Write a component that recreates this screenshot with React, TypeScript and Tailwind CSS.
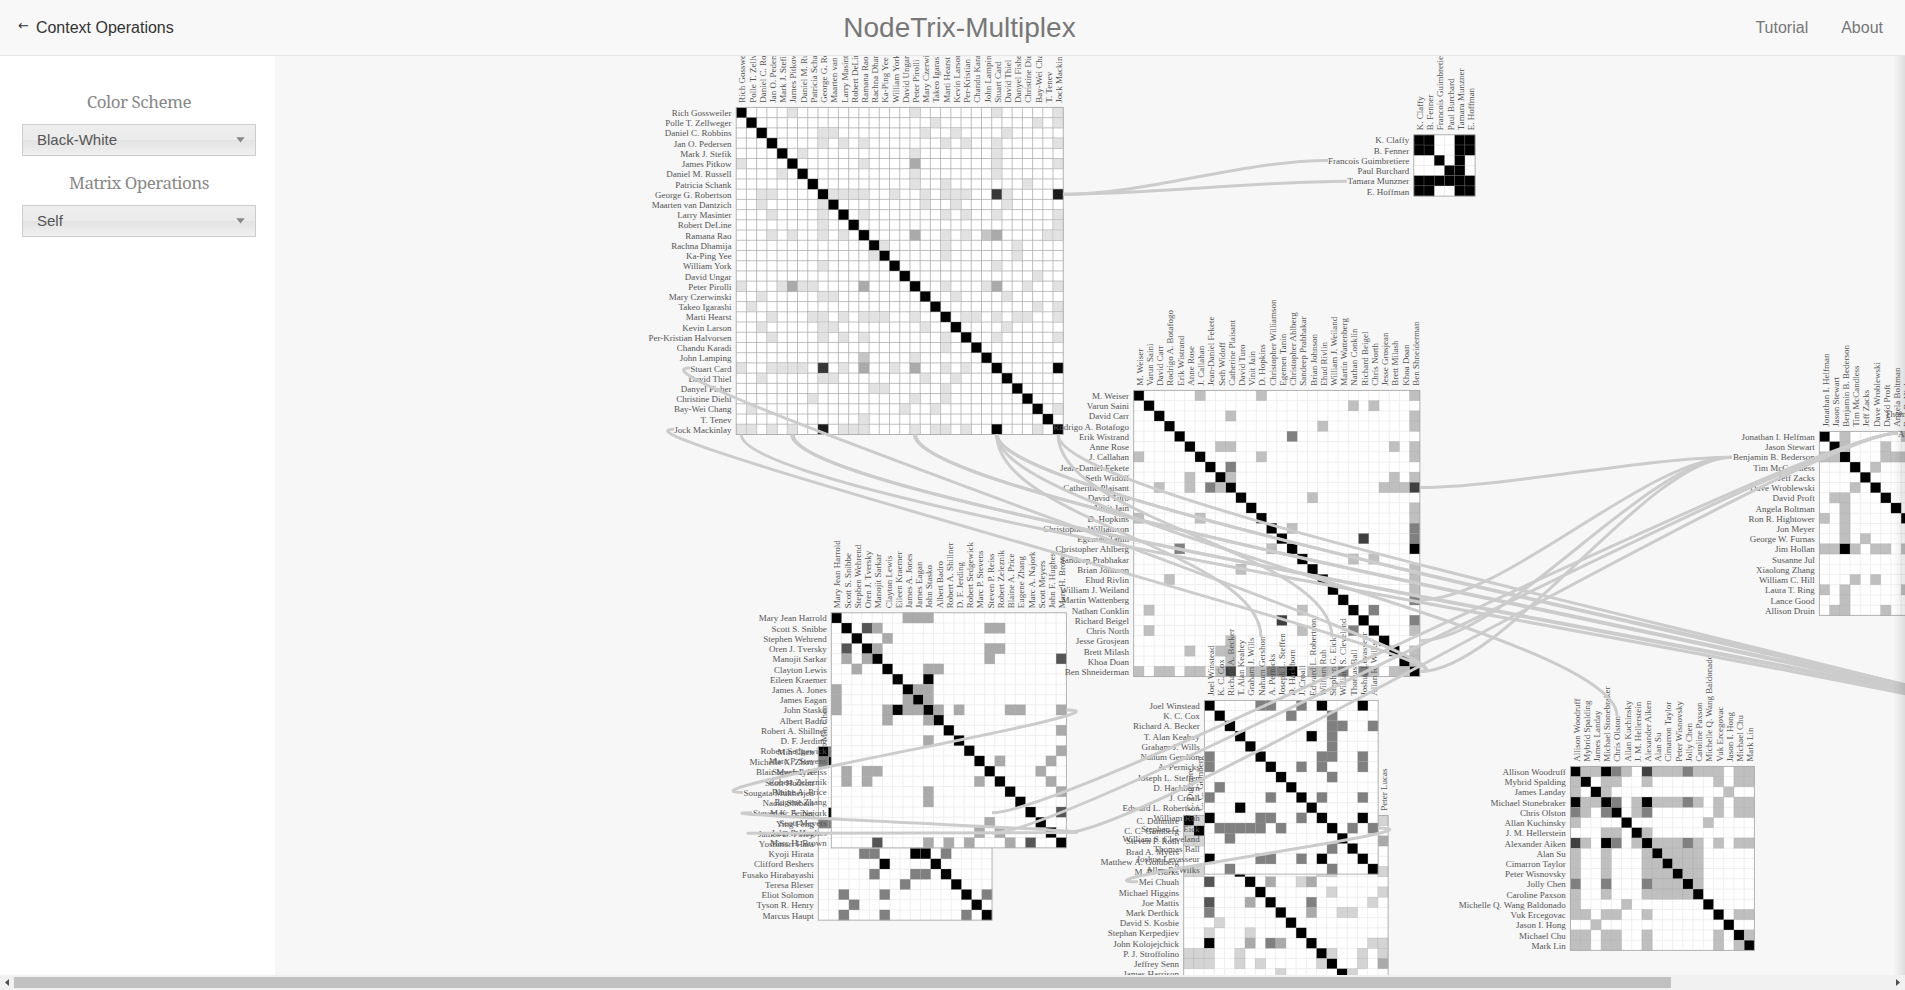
import React from "react";

const PITCH = 10.22;
const SHADES: Record<string, string> = {
  k: "#000000", r: "#1c1c1c", q: "#383838", t: "#404040", d: "#555555",
  m: "#808080", a: "#aaaaaa", g: "#c5c5c5", b: "#bfbfbf", l: "#d4d4d4", e: "#e2e2e2",
};

type Matrix = {
  x: number;
  y: number;
  names: string[];
  // "row:col col=shade ..." for the upper triangle; mirrored when drawn
  cells: string[];
  base: string;
  strong?: boolean;
};

const split = (s: string) => s.split(",").map((v) => v.trim());

const parc: Matrix = {
  x: 736.2, y: 107.4, base: "e", strong: true,
  names: split("Rich Gossweiler,Polle T. Zellweger,Daniel C. Robbins,Jan O. Pedersen,Mark J. Stefik,James Pitkow,Daniel M. Russell,Patricia Schank,George G. Robertson,Maarten van Dantzich,Larry Masinter,Robert DeLine,Ramana Rao,Rachna Dhamija,Ka-Ping Yee,William York,David Ungar,Peter Pirolli,Mary Czerwinski,Takeo Igarashi,Marti Hearst,Kevin Larson,Per-Kristian Halvorsen,Chandu Karadi,John Lamping,Stuart Card,David Thiel,Danyel Fisher,Christine Diehl,Bay-Wei Chang,T. Tenev,Jock Mackinlay"),
  cells: ["0:5 17 25 31", "1:19 29 31", "2:8 9 18 21 26", "3:8 10 12 20 22 25 31", "4:6 17 25", "5:12 17=a 25 31", "6:17 25", "7:17 20 28",
    "8:9 10 11 12 15 18 20 21 22 25=q 26 31=r", "9:18 21 26", "10:12 20 22 25 31", "11:31", "12:17=a 20 22 24=g 25=a 30 31", "13:14 20 27", "14:20 27",
    "15:25", "16:29", "17:20 24 25=a 28 31", "18:21 26", "19:29 31", "20:22 23 25 27 28 31", "21:26", "22:25 31", "25:31=k", "29:31"],
};

const claffy: Matrix = {
  x: 1413.8, y: 134.8, base: "k",
  names: split("K. Claffy,B. Fenner,Francois Guimbretiere,Paul Burchard,Tamara Munzner,E. Hoffman"),
  cells: ["0:1 4 5", "1:4 5", "2:4", "3:4", "4:5"],
};

const maryland: Matrix = {
  x: 1133.7, y: 390.4, base: "b",
  names: split("M. Weiser,Varun Saini,David Carr,Rodrigo A. Botafogo,Erik Wistrand,Anne Rose,J. Callahan,Jean-Daniel Fekete,Seth Widoff,Catherine Plaisant,David Turo,Vinit Jain,D. Hopkins,Christopher Williamson,Egemen Tanin,Christopher Ahlberg,Sandeep Prabhakar,Brian Johnson,Ehud Rivlin,William J. Weiland,Martin Wattenberg,Nathan Conklin,Richard Beigel,Chris North,Jesse Grosjean,Brett Milash,Khoa Doan,Ben Shneiderman"),
  cells: ["0:6 12 27", "1:21 23", "2:9 27", "3:18 27", "4:15=m", "5:8 9 25 27", "6:12 27", "7:9=m", "8:9 25 27", "9:24 25 26 27=t", "10:17", "11:27", "12:27",
    "13:15 27=m", "14:22=t 27=m", "15:27=k", "16:21 23", "17:27", "18:27", "19:27", "20:27=m", "21:23=m", "22:27=m", "23:27", "25:27", "26:27"],
};

const brown: Matrix = {
  x: 831.3, y: 612.8, base: "a",
  names: split("Mary Jean Harrold,Scott S. Snibbe,Stephen Wehrend,Oren J. Tversky,Manojit Sarkar,Clayton Lewis,Eileen Kraemer,James A. Jones,James Eagan,John Stasko,Albert Badro,Robert A. Shillner,D. F. Jerding,Robert Sedgewick,Marc P. Stevens,Steven P. Reiss,Robert Zeleznik,Blaine A. Price,Eugene Zhang,Marc A. Najork,Scott Meyers,John F. Hughes,Marc H. Brown"),
  cells: ["0:7 8 9", "1:3=d 4 15 16", "2:5", "3:4 15 16", "4:15 22=d", "5:9 10", "6:9=k", "7:8 9", "8:9", "9:10 12 17 18 22", "11:22", "13:22", "14:16 21", "15:20", "16:21", "17:22", "19:22=d"],
};

const foley: Matrix = {
  x: 818.3, y: 746.4, base: "m",
  names: split("Min Chen,Michelle X. Zhou,Blair MacIntyre,Scott Hudson,Sougata Mukherjea,Naoki Shibata,Steven K. Feiner,Ying Feng,James D. Foley,Yoshinori Hara,Kyoji Hirata,Clifford Beshers,Fusako Hirabayashi,Teresa Bleser,Eliot Solomon,Tyson R. Henry,Marcus Haupt"),
  cells: ["0:1 7", "1:6=k 7", "2:14 16", "3:15", "4:10", "5:10 12", "6:11=k 14 16", "8:13", "9:10=k 12", "10:12", "14:16"],
};

const eick: Matrix = {
  x: 1204.4, y: 700.4, base: "m",
  names: split("Joel Winstead,K. C. Cox,Richard A. Becker,T. Alan Keahey,Graham J. Wills,Nahum Gershon,A. Pernicks,Joseph L. Steffen,D. Hackborn,J. Croall,Edward L. Robertson,William Ruh,Stephen G. Eick,William S. Cleveland,Thomas Ball,Joshua Levasseur,Allan R. Wilks"),
  cells: ["0:5 6 9 11=k 15=k", "1:8 12", "2:12 13 16", "3:10=k 12", "4:12", "5:11 12 15", "6:9 11 15", "7:12", "9:11 15", "11:15=k", "12:14 16"],
};

const roth: Matrix = {
  x: 1183.7, y: 815.4, base: "l",
  names: split("C. Dunmire,C. C. Gomberg,Steven F. Roth,Brad A. Myers,Matthew A. Goldberg,M. B. Burks,Mei Chuah,Michael Higgins,Joe Mattis,Mark Derthick,David S. Kosbie,Stephan Kerpedjiev,John Kolojejchick,P. J. Stroffolino,Jeffrey Senn,James Harrison,,,,Peter Lucas"),
  cells: ["0:1 2 5 13 14 19", "1:2 5 13 14", "2:6=d 8=d 9=m 11 12=k 13 14 19=a", "3:10", "5:13 14 19", "6:8=a 11 12=a", "7:14 19", "8:12=m 18", "9:12=a 15 16",
    "12:18 19", "13:14 17 19", "14:17 19=a", "15:16"],
};

const stonebraker: Matrix = {
  x: 1570.4, y: 766.4, base: "b",
  names: split("Allison Woodruff,Mybrid Spalding,James Landay,Michael Stonebraker,Chris Olston,Allan Kuchinsky,J. M. Hellerstein,Alexander Aiken,Alan Su,Cimarron Taylor,Peter Wisnovsky,Jolly Chen,Caroline Paxson,Michelle Q. Wang Baldonado,Vuk Ercegovac,Jason I. Hong,Michael Chu,Mark Lin"),
  cells: ["0:1 2 3=k 4=m 5 7=t 8 9 10 11=m 12 13 14 16 17", "1:3 4 7 14 16 17", "2:3 15", "3:4=m 6 7=k 8 9 10 11=m 12 14 16 17", "4:6 7=m 14 16 17", "5:13", "6:7",
    "7:8 9 10 11=m 12 14 16 17", "8:9 10 11 12", "9:10 11 12", "10:11 12", "11:12", "14:16 17", "16:17"],
};

const bederson: Matrix = {
  x: 1819.4, y: 431.4, base: "b",
  names: split("Jonathan I. Helfman,Jason Stewart,Benjamin B. Bederson,Tim McCandless,Jeff Zacks,Dave Wroblewski,David Proft,Angela Boltman,Ron R. Hightower,Jon Meyer,George W. Furnas,Jim Hollan,Susanne Jul,Xiaolong Zhang,William C. Hill,Laura T. Ring,Lance Good,Allison Druin"),
  cells: ["0:2 8 11 15", "1:2 6 11 17", "2:6 7 8 9 10 11=k 15 16 17", "3:5 11 14", "4:10", "5:11 14", "6:11 17", "8:11 15"],
};

function parse(m: Matrix) {
  const out: { r: number; c: number; f: string }[] = m.names.map((_, i) => ({ r: i, c: i, f: "#000000" }));
  m.cells.forEach((line) => {
    const [row, rest] = line.split(":");
    rest.split(" ").forEach((tok) => {
      const [col, shade] = tok.split("=");
      const f = SHADES[shade ?? m.base];
      out.push({ r: +row, c: +col, f }, { r: +col, c: +row, f });
    });
  });
  return out;
}

function MatrixView({ m }: { m: Matrix }) {
  const n = m.names.length;
  const size = n * PITCH;
  const lines = Array.from({ length: n - 1 }, (_, i) => (i + 1) * PITCH);
  return (
    <g>
      <rect x={m.x} y={m.y} width={size} height={size} fill="#fff" />
      <g stroke={m.strong ? "#a4a4a4" : "#ededed"} strokeWidth={m.strong ? 0.7 : 0.9}>
        {lines.map((d, i) => (
          <React.Fragment key={i}>
            <line x1={m.x + d} x2={m.x + d} y1={m.y} y2={m.y + size} />
            <line y1={m.y + d} y2={m.y + d} x1={m.x} x2={m.x + size} />
          </React.Fragment>
        ))}
      </g>
      {parse(m).map((c, i) => (
        <rect key={i} x={m.x + c.c * PITCH} y={m.y + c.r * PITCH} width={PITCH} height={PITCH} fill={c.f}
          stroke="#999" strokeWidth={0.4} strokeOpacity={0.5} />
      ))}
      <rect x={m.x} y={m.y} width={size} height={size} fill="none" stroke="#aaa" strokeWidth={0.9} />
      {m.names.map((name, i) => {
        const c = (i + 0.5) * PITCH;
        return (
          <React.Fragment key={i}>
            <text x={m.x - 4.6} y={m.y + c + 3.5} textAnchor="end">{name}</text>
            <text transform={`translate(${m.x + c + 4},${m.y - 4.6}) rotate(-90)`}>{name}</text>
          </React.Fragment>
        );
      })}
    </g>
  );
}

const REACH = 85;
// links that leave a matrix at its right side
const side = (x0: number, y0: number, x1: number, y1: number) =>
  `M${x0},${y0}C${x0 + REACH},${y0} ${x1 - REACH},${y1} ${x1},${y1}`;
// links that leave a label to the left and come back from the right
const loop = (x0: number, y0: number, x1: number, y1: number, reach = REACH) =>
  `M${x0},${y0}C${x0 - reach},${y0} ${x1 + reach},${y1} ${x1},${y1}`;
// links that leave a matrix at its bottom edge
const drop = (x0: number, y0: number, x1: number, y1: number) =>
  `M${x0},${y0}C${x0},${y0 + REACH} ${x1},${y1 - REACH} ${x1},${y1}`;

const LINKS = [
  side(1063, 194.2, 1328, 160.4), side(1063, 194.2, 1347, 181.2),
  side(1420, 487.5, 1732, 457.2), side(1420, 599.9, 1732, 457.2), side(1420, 640.8, 1732, 457.2), side(1420, 671.4, 1732, 457.2),
  side(992, 812.8, 1898, 433), side(992, 833.3, 1898, 433), side(1066.4, 832.5, 1898, 433),
  loop(690, 368, 1420, 671.4, 92), loop(674, 429.3, 1420, 671.4, 92),
  loop(743, 792.4, 1066.4, 709.9), loop(752, 812.8, 1066.4, 832.5), loop(758, 833.3, 1066.4, 832.5),
  loop(1138, 881.8, 1378, 828.1),
  drop(741.3, 434.5, 2278, 803), drop(791.7, 434.5, 2286, 803), drop(793.2, 434.5, 2276, 803),
  drop(914.3, 434.5, 2286, 809), drop(915.7, 434.5, 2276, 809), drop(996.2, 434.5, 2286, 813), drop(997.4, 434.5, 2276, 813),
  drop(1058.1, 434.5, 2278, 818),
  drop(996.8, 434.5, 1261, 637), drop(996.8, 434.5, 1617, 716), drop(1058.1, 434.5, 1332, 637),
];

function Graph() {
  return (
    <svg className="block min-w-0 flex-1" width={1630} height={919} viewBox="275 56 1630 919" fontFamily="'Liberation Serif', serif" fontSize={9} fill="#555">
      <defs>
        <linearGradient id="edge">
          <stop offset="0" stopColor="#000" stopOpacity="0" />
          <stop offset="1" stopColor="#000" stopOpacity="0.1" />
        </linearGradient>
      </defs>
      {[parc, claffy, foley, brown, maryland, roth, eick, stonebraker, bederson].map((m) => (
        <MatrixView key={m.names[0]} m={m} />
      ))}
      <text x={1885} y={416.5}>Thomas</text>
      <g fill="none" stroke="#ccc" strokeWidth={3}>
        {LINKS.map((d, i) => <path key={i} d={d} />)}
      </g>
      <text x={1898} y={436.5}>Am</text>
      <rect x={1893} y={56} width={12} height={919} fill="url(#edge)" />
    </svg>
  );
}

function Select({ label }: { label: string }) {
  return (
    <div className="flex h-8 w-[234px] shrink-0 items-center justify-between border border-[#ccc] bg-[linear-gradient(#eeeeee_0%,#ebebeb_50%,#e3e3e3_50%,#f0f0f0_100%)] pr-[10px] pl-[14px] text-[#555]">
      <span className="text-[15px]">{label}</span>
      <svg width="9" height="6" viewBox="0 0 9 6"><path d="M0.3 0.3h8.4L4.5 5.5z" fill="#888" /></svg>
    </div>
  );
}

function Heading({ children }: { children: React.ReactNode }) {
  return (
    <h2 className="flex h-[35px] w-[234px] justify-center font-['Noto_Serif','Liberation_Serif',serif] text-[17px] tracking-[-0.5px] text-[#888]">
      {children}
    </h2>
  );
}

export default function App() {
  return (
    <div className="flex h-[990px] w-[1905px] flex-col overflow-hidden bg-[#f7f7f7] font-['Liberation_Sans',sans-serif]">
      <header className="grid h-14 shrink-0 grid-cols-[1fr_auto_1fr] items-center border-b border-[#e7e7e7] bg-[#f8f8f8] pr-[4px] pl-[18px] text-base text-[#777]">
        <div className="flex items-center gap-[7px] text-[#333]">
          <span className="pb-1 font-['DejaVu_Sans',sans-serif] text-[13px] leading-none">←</span>
          <span>Context Operations</span>
        </div>
        <h1 className="text-[28px] leading-none">NodeTrix-Multiplex</h1>
        <nav className="flex justify-end gap-[33px] pr-[18px]"><span>Tutorial</span><span>About</span></nav>
      </header>
      <main className="flex h-[919px] shrink-0">
        <aside className="flex w-[275px] shrink-0 flex-col bg-white pt-[33px] pl-[22px]">
          <Heading>Color Scheme</Heading>
          <Select label="Black-White" />
          <div className="h-[14px] shrink-0" />
          <Heading>Matrix Operations</Heading>
          <Select label="Self" />
        </aside>
        <Graph />
      </main>
      <footer className="flex h-[15px] shrink-0 items-center justify-between bg-[#f1f1f1] px-[5px]">
        <svg width="4" height="7" viewBox="0 0 4 7"><path d="M4 0v7L0 3.5z" fill="#505050" /></svg>
        <div className="mr-auto ml-[5px] h-[11px] w-[1657px] bg-[#c1c1c1]" />
        <svg width="4" height="7" viewBox="0 0 4 7"><path d="M0 0v7l4-3.5z" fill="#505050" /></svg>
      </footer>
    </div>
  );
}
